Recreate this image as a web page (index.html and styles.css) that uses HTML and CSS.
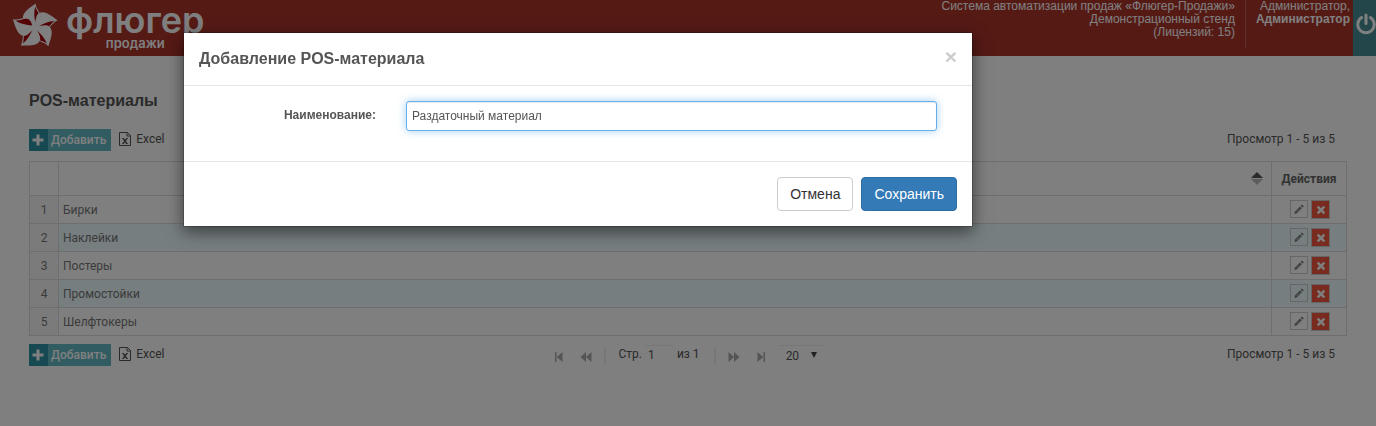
FILE: index.html
```html
<!DOCTYPE html>
<html lang="ru">

<head>
    <meta charset="UTF-8">
    <meta name="viewport" content="width=device-width, initial-scale=1.0">
    <title>POS-материалы</title>
    <link rel="stylesheet" href="styles.css">
</head>

<body>
    <!-- Общие иконки -->
    <svg class="sprite" aria-hidden="true">
        <symbol id="icon-plus" viewBox="0 0 12 12">
            <path d="M4.5 0.5h3v4h4v3h-4v4h-3v-4h-4v-3h4z" fill="currentColor" />
        </symbol>
        <symbol id="icon-excel" viewBox="0 0 12 14">
            <path d="M0.5 0.5h8l3 3v10h-11z" fill="none" stroke="currentColor" />
            <path d="M8 0.500v3.500h3.500" fill="none" stroke="currentColor" />
            <path d="M4.200 6.500l3.600 5M7.800 6.500l-3.600 5" fill="none" stroke="currentColor" stroke-width="1.300" />
            <path d="M3 6.500h2M7 6.500h2M3 11.500h2M7 11.500h2" fill="none" stroke="currentColor" stroke-width="0.8" />
        </symbol>
        <symbol id="icon-edit" viewBox="0 0 12 12">
            <path d="M1.500 11l0.500-2.600 5-5 1.900 1.900-5 5z" fill="currentColor" />
            <path d="M3.500 9l3.500-3.500" stroke="#fff" stroke-width="0.8" stroke-dasharray="1 0.700" />
            <path d="M7.700 2.700l1.100-1.200 2 2-1.200 1.100z" fill="currentColor" />
        </symbol>
        <symbol id="icon-delete" viewBox="0 0 10 10">
            <path d="M2.6 0.8L5 3.2l2.4-2.4 1.8 1.8L6.8 5l2.4 2.4-1.8 1.8L5 6.8 2.6 9.2 0.8 7.4 3.2 5 0.8 2.6z" fill="currentColor" />
        </symbol>
        <symbol id="icon-first" viewBox="0 0 12 12">
            <path d="M2 1h1.500v10H2zM9.500 1v10L3.800 6z" fill="currentColor" />
        </symbol>
        <symbol id="icon-prev" viewBox="0 0 12 12">
            <path d="M6 1v10L0.5 6zM11.5 1v10L6 6z" fill="currentColor" />
        </symbol>
    </svg>

    <header>
        <a href="#" class="logo">
            <svg class="logo-mark" viewBox="0 0 46 46" aria-hidden="true">
                <g id="blade">
                    <path d="M23.500 0.500C18 5 10 9 11 16C12 20 19 22 23 25C26 22 29 18 29 14C28.500 9 24.500 7 23.500 0.500z" fill="#fff" />
                    <path d="M23.300 3.500C21.500 9 22.500 15 23.500 21C26 19.500 29 17 28.300 13.500C27.500 10 24 7.500 23.300 3.500z" fill="#a4000c" />
                </g>
                <use href="#blade" transform="rotate(72 23 24)" />
                <use href="#blade" transform="rotate(144 23 24)" />
                <use href="#blade" transform="rotate(216 23 24)" />
                <use href="#blade" transform="rotate(288 23 24)" />
            </svg>
            <span class="logo-text">
                <span class="logo-name">флюгер</span>
                <span class="logo-sub">продажи</span>
            </span>
        </a>
        <div class="header-right">
            <div class="system-info">
                Система автоматизации продаж «Флюгер-Продажи»<br>
                Демонстрационный стенд<br>
                (Лицензий: 15)
            </div>
            <div class="user-info">
                Администратор,<br>
                <b>Администратор</b>
            </div>
            <button class="logout" aria-label="Выход">
                <svg viewBox="0 0 20 22" aria-hidden="true">
                    <path d="M5.600 4.600A8.200 8.200 0 1 0 14.400 4.600" fill="none" stroke="currentColor" stroke-width="3" stroke-linecap="round" />
                    <path d="M10 2v8.500" stroke="currentColor" stroke-width="3" stroke-linecap="round" />
                </svg>
            </button>
        </div>
    </header>

    <main class="container">
        <h1>POS-материалы</h1>

        <div class="toolbar">
            <div class="tools">
                <button class="add"><span class="add-icon"><svg><use href="#icon-plus" /></svg></span><span class="add-text">Добавить</span></button>
                <button class="excel"><svg><use href="#icon-excel" /></svg>Excel</button>
            </div>
            <span class="records">Просмотр 1 - 5 из 5</span>
        </div>

        <table class="grid">
            <thead>
                <tr>
                    <th class="num"></th>
                    <th class="name">
                        <svg class="sort" viewBox="0 0 12 13" role="img" aria-label="Сортировка">
                            <path d="M0 6l6-6 6 6z" fill="#555" />
                            <path d="M0 7h12l-6 6z" fill="#bbb" />
                        </svg>
                    </th>
                    <th class="actions">Действия</th>
                </tr>
            </thead>
            <tbody>
                <tr>
                    <td class="num">1</td>
                    <td>Бирки</td>
                    <td class="actions"><div class="row-buttons"><button class="edit" aria-label="Изменить"><svg><use href="#icon-edit" /></svg></button><button class="delete" aria-label="Удалить"><svg><use href="#icon-delete" /></svg></button></div></td>
                </tr>
                <tr>
                    <td class="num">2</td>
                    <td>Наклейки</td>
                    <td class="actions"><div class="row-buttons"><button class="edit" aria-label="Изменить"><svg><use href="#icon-edit" /></svg></button><button class="delete" aria-label="Удалить"><svg><use href="#icon-delete" /></svg></button></div></td>
                </tr>
                <tr>
                    <td class="num">3</td>
                    <td>Постеры</td>
                    <td class="actions"><div class="row-buttons"><button class="edit" aria-label="Изменить"><svg><use href="#icon-edit" /></svg></button><button class="delete" aria-label="Удалить"><svg><use href="#icon-delete" /></svg></button></div></td>
                </tr>
                <tr>
                    <td class="num">4</td>
                    <td>Промостойки</td>
                    <td class="actions"><div class="row-buttons"><button class="edit" aria-label="Изменить"><svg><use href="#icon-edit" /></svg></button><button class="delete" aria-label="Удалить"><svg><use href="#icon-delete" /></svg></button></div></td>
                </tr>
                <tr>
                    <td class="num">5</td>
                    <td>Шелфтокеры</td>
                    <td class="actions"><div class="row-buttons"><button class="edit" aria-label="Изменить"><svg><use href="#icon-edit" /></svg></button><button class="delete" aria-label="Удалить"><svg><use href="#icon-delete" /></svg></button></div></td>
                </tr>
            </tbody>
        </table>

        <div class="toolbar">
            <div class="tools">
                <button class="add"><span class="add-icon"><svg><use href="#icon-plus" /></svg></span><span class="add-text">Добавить</span></button>
                <button class="excel"><svg><use href="#icon-excel" /></svg>Excel</button>
            </div>
            <div class="pager">
                <div class="page-buttons">
                    <button aria-label="Первая"><svg><use href="#icon-first" /></svg></button>
                    <button aria-label="Предыдущая"><svg><use href="#icon-prev" /></svg></button>
                </div>
                <span class="separator"></span>
                <label for="page">Стр.</label>
                <input type="text" id="page" value="1">
                <span class="total">из 1</span>
                <span class="separator"></span>
                <div class="page-buttons next">
                    <button aria-label="Следующая"><svg><use href="#icon-prev" /></svg></button>
                    <button aria-label="Последняя"><svg><use href="#icon-first" /></svg></button>
                </div>
                <span class="page-size">
                    <select aria-label="Записей на странице">
                        <option>20</option>
                        <option>50</option>
                        <option>100</option>
                    </select>
                </span>
            </div>
            <span class="records">Просмотр 1 - 5 из 5</span>
        </div>
    </main>

    <div class="overlay"></div>

    <!-- Окно добавления -->
    <div class="modal" role="dialog" aria-labelledby="modal-title">
        <div class="modal-header">
            <h2 id="modal-title">Добавление POS-материала</h2>
            <button class="close" aria-label="Закрыть">×</button>
        </div>
        <form onsubmit="event.preventDefault();">
            <div class="modal-body">
                <label for="name">Наименование:</label>
                <input type="text" id="name" name="name" value="Раздаточный материал">
            </div>
            <div class="modal-footer">
                <button type="button" class="btn">Отмена</button>
                <button type="submit" class="btn btn-primary">Сохранить</button>
            </div>
        </form>
    </div>
</body>

</html>
```

FILE: styles.css
```css
:root {
    --header-color: #ac342b;
    --teal: #2c93a3;
    --teal-light: #62bac5;
    --border-color: #ddd;
    --text-color: #555;
    --font-family: "Liberation Sans", Arial, sans-serif;
    --grid-font: Roboto, sans-serif;
}

* {
    box-sizing: border-box;
}

body {
    margin: 0;
    font-family: var(--font-family);
    font-size: 12px;
    color: var(--text-color);
    background-color: white;
}

button {
    padding: 0;
    border: none;
    background: none;
    font-family: inherit;
    color: inherit;
    cursor: pointer;
}

svg {
    display: block;
}

.sprite {
    position: absolute;
    width: 0;
    height: 0;
}

header {
    display: flex;
    justify-content: space-between;
    height: 56px;
    background-color: var(--header-color);
    color: white;
}

.logo {
    display: flex;
    gap: 8px;
    padding: 3px 0 0 12px;
    color: white;
    text-decoration: none;
}

.logo-mark {
    width: 46px;
    height: 46px;
}

.logo-text {
    display: flex;
    flex-direction: column;
    align-items: center;
    font-family: Inter, sans-serif;
    font-weight: 600;
}

.logo-name {
    font-size: 36px;
    line-height: 34px;
}

.logo-sub {
    font-size: 13px;
    line-height: 12px;
}

.header-right {
    display: flex;
    line-height: 13px;
    text-align: right;
    white-space: nowrap;
}

.system-info {
    padding-right: 10px;
}

.user-info {
    height: 48px;
    padding-left: 10px;
    padding-right: 3px;
    border-left: 1px solid #bf6058;
}

.logout {
    width: 23px;
    padding: 0 0 8px 3px;
    background-color: #448c94;
}

.logout svg {
    width: 20px;
    height: 22px;
}

.container {
    padding: 36px 29px 0;
    font-family: var(--grid-font);
}

h1 {
    margin: 0 0 20px;
    font-family: var(--font-family);
    font-size: 16px;
    line-height: 17px;
}

.toolbar {
    display: flex;
    align-items: center;
    height: 22px;
}

.tools {
    display: flex;
    flex: 1;
    gap: 8px;
}

.add {
    display: flex;
    height: 22px;
    background-color: var(--teal-light);
    color: white;
    font-size: 12px;
    font-weight: 500;
    line-height: 22px;
}

.add-icon {
    padding: 5px 4px 0 3px;
    width: 19px;
    background-color: var(--teal);
}

.add-icon svg {
    width: 12px;
    height: 12px;
}

.add-text {
    padding: 0 5px 0 3px;
}

.excel {
    display: flex;
    gap: 5px;
    font-size: 12px;
    line-height: 20px;
}

.excel svg {
    width: 12px;
    height: 14px;
    margin-top: 3px;
}

.records {
    flex: 1;
    padding-right: 12px;
    text-align: right;
}

.records,
.pager label,
.total {
    line-height: 20px;
    padding-bottom: 2px;
}

.grid {
    width: 100%;
    margin: 10px 0 8px;
    border-collapse: collapse;
    color: #777;
}

.grid th,
.grid td {
    height: 28px;
    padding: 0 4px;
    border: 1px solid var(--border-color);
    text-align: left;
}

.grid th {
    height: 34px;
    color: #666;
}

.grid .num {
    width: 29px;
    text-align: center;
}

.grid td.num {
    background-color: #f6f6f6;
}

.grid .actions {
    width: 75px;
    padding: 0;
    text-align: center;
}

.grid tbody tr:nth-child(even) {
    background-color: #ecfcfe;
}

.sort {
    width: 12px;
    height: 13px;
    margin: 0 4px 0 auto;
}

.row-buttons {
    display: flex;
    justify-content: center;
    gap: 3px;
    padding-left: 2px;
}

.edit,
.delete {
    display: flex;
    align-items: center;
    justify-content: center;
    width: 18px;
    height: 18px;
    border: 1px solid #ccc;
}

.delete {
    width: 19px;
    height: 19px;
    background-color: #f2573f;
    color: white;
}

.edit svg {
    width: 12px;
    height: 12px;
}

.delete svg {
    width: 10px;
    height: 10px;
}

.pager {
    display: flex;
    align-items: center;
    padding-left: 12px;
}

.page-buttons {
    display: flex;
    gap: 15px;
    margin: 4px 12px 0 0;
    color: #aaa;
}

.page-buttons svg {
    width: 12px;
    height: 12px;
}

.page-buttons.next svg {
    transform: scaleX(-1);
}

.separator {
    width: 2px;
    height: 18px;
    margin: 2px 12px 0 0;
    background-color: #eee;
}

.pager input {
    width: 28px;
    height: 18px;
    margin: 0 4px 2px 3px;
    padding: 0 3px;
    border: none;
    border-top: 1px solid #eee;
    background: none;
    font-family: inherit;
    font-size: 12px;
    color: inherit;
}

.total {
    margin-right: 14px;
}

.page-size {
    display: flex;
    align-items: center;
}

.page-size select {
    width: 44px;
    height: 20px;
    padding: 0 7px;
    appearance: none;
    border: none;
    border-top: 1px solid #eee;
    background: none;
    font-family: inherit;
    font-size: 12px;
    color: inherit;
}

.page-size::after {
    content: "";
    width: 0;
    margin: 0 6px 0 -12px;
    border: 3px solid transparent;
    border-top: 6px solid #444;
    border-bottom: none;
}

.overlay {
    position: fixed;
    top: 0;
    right: 0;
    bottom: 0;
    left: 0;
    background: rgba(0, 0, 0, 0.5);
}

.modal {
    position: absolute;
    top: 32px;
    left: 183px;
    width: 790px;
    background-color: white;
    background-clip: padding-box;
    border: 1px solid rgba(0, 0, 0, 0.2);
    box-shadow: 0 5px 15px rgba(0, 0, 0, 0.5);
}

.modal-header {
    display: flex;
    justify-content: space-between;
    padding: 15px;
    border-bottom: 1px solid #e5e5e5;
}

.modal-header h2 {
    margin: 0;
    font-size: 16px;
    line-height: 22px;
}

.close {
    height: 18px;
    font-size: 21px;
    font-weight: bold;
    line-height: 18px;
    color: #ccc;
}

.modal-body {
    display: flex;
    gap: 30px;
    padding: 15px 35px 30px 0;
}

.modal-body label {
    width: 192px;
    padding-top: 7px;
    font-weight: bold;
    text-align: right;
}

.modal-body input {
    flex: 1;
    height: 30px;
    padding: 0 5px;
    border: 1px solid #66afe9;
    border-radius: 3px;
    outline: none;
    box-shadow: inset 0 1px 1px rgba(0, 0, 0, 0.08), 0 0 8px rgba(102, 175, 233, 0.6);
    font-family: inherit;
    font-size: 12px;
    color: var(--text-color);
}

.modal-footer {
    display: flex;
    justify-content: flex-end;
    gap: 8px;
    padding: 15px;
    border-top: 1px solid #e5e5e5;
}

.btn {
    height: 34px;
    padding: 0 12px;
    border: 1px solid #ccc;
    border-radius: 4px;
    background-color: white;
    font-size: 14px;
    color: #333;
}

.btn-primary {
    border-color: #2e6da4;
    background-color: #337ab7;
    color: white;
}
```
